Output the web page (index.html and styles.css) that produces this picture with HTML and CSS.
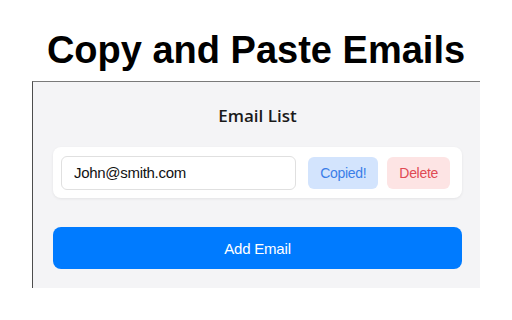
FILE: index.html
```html
<!DOCTYPE html>
<html lang="en">
<head>
<meta charset="utf-8">
<title>Copy and Paste Emails</title>
<link rel="stylesheet" href="styles.css">
</head>
<body>
<h1 class="title">Copy and Paste Emails</h1>
<div class="panel">
  <h2 class="list-title">Email List</h2>
  <div class="card">
    <input class="email-input" type="text" value="John@smith.com">
    <button class="btn btn-copy">Copied!</button>
    <button class="btn btn-delete">Delete</button>
  </div>
  <button class="add-btn">Add Email</button>
</div>
</body>
</html>
```
FILE: styles.css
```css
html, body {
  margin: 0;
  padding: 0;
  background: #ffffff;
}
body {
  width: 512px;
  height: 320px;
  overflow: hidden;
  font-family: "Liberation Sans", Arial, sans-serif;
}
.title {
  margin: 30px 0 11px;
  font-family: "Liberation Sans", Arial, sans-serif;
  font-weight: 700;
  font-size: 38px;
  line-height: 40px;
  text-align: center;
  color: #000;
}
.panel {
  margin-left: 32px;
  width: 448px;
  box-sizing: border-box;
  border-left: 1px solid #4d4d4d;
  border-top: 1px solid #7a7a7a;
  background: #f4f4f6;
  padding: 22px 18px 19px 20px;
  display: flex;
  flex-direction: column;
}
.list-title {
  margin: 0 0 19px;
  font-family: "Open Sans", sans-serif;
  font-weight: 600;
  font-size: 17px;
  line-height: 24px;
  text-align: center;
  color: #1a1a1a;
}
.card {
  display: flex;
  align-items: center;
  gap: 9px;
  height: 51px;
  box-sizing: border-box;
  padding: 0 12px 0 8px;
  background: #fff;
  border-radius: 8px;
  box-shadow: 0 1px 3px rgba(0, 0, 0, 0.07);
}
.email-input {
  flex: 1;
  min-width: 0;
  height: 34px;
  box-sizing: border-box;
  margin-right: 3px;
  padding: 0 12px;
  border: 1px solid #e0e0e0;
  border-radius: 6px;
  background: #fff;
  font-family: "Liberation Sans", Arial, sans-serif;
  font-size: 15px;
  letter-spacing: -0.3px;
  color: #111;
  outline: none;
}
.btn {
  height: 32px;
  padding: 0 12px;
  border: none;
  border-radius: 6px;
  font-family: "Liberation Sans", Arial, sans-serif;
  font-size: 14px;
  letter-spacing: -0.3px;
}
.btn-copy {
  background: #d3e4fd;
  color: #3a7ee8;
}
.btn-delete {
  background: #fde4e4;
  color: #e04a53;
}
.add-btn {
  margin-top: 29px;
  height: 42px;
  border: none;
  border-radius: 8px;
  background: #007bff;
  color: #fff;
  font-family: "Liberation Sans", Arial, sans-serif;
  font-size: 15px;
  letter-spacing: -0.2px;
}
```
